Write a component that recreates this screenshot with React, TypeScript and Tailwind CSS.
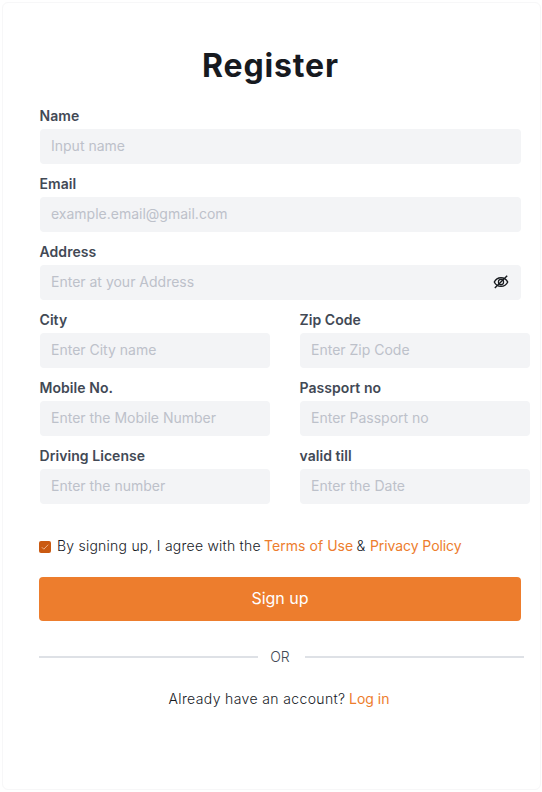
import React from "react";

type FieldProps = {
  label: string;
  placeholder: string;
  children?: React.ReactNode;
};

function Field({ label, placeholder, children }: FieldProps) {
  return (
    <label className="flex h-[58px] flex-col">
      <span className="h-[23px] text-sm leading-5 font-semibold tracking-[0.06px] text-[#424955]">{label}</span>
      <span className="flex h-[35px] items-center rounded-[4px] bg-[#f3f4f6] pr-3 pl-[11.5px]">
        <input
          className="min-w-0 flex-1 bg-transparent pb-[2px] text-sm leading-5 text-[#424955] outline-none placeholder:text-[#bdc1ca]"
          placeholder={placeholder}
        />
        {children}
      </span>
    </label>
  );
}

function EyeOff() {
  return (
    <svg className="mb-px size-4 shrink-0" viewBox="0 0 16 16" fill="none" stroke="#171a1f" strokeWidth="1.4">
      <path d="M1.3 8C2.6 5.2 5 3.7 8 3.7S13.4 5.2 14.7 8C13.4 10.8 11 12.3 8 12.3S2.6 10.8 1.3 8Z" />
      <circle cx="8" cy="8" r="2.6" strokeWidth="1.2" />
      <path d="M1.8 14 14.2 1.8" />
    </svg>
  );
}

export default function App() {
  return (
    <div className="h-[792px] w-[542px] bg-white pt-[2px] pl-[2px] font-['Inter','Liberation_Sans',sans-serif]">
      <main className="h-[788px] w-[539px] rounded-[6px] border border-[#f7f7f8] bg-white pt-[38px] pl-9">
        <h1 className="ml-[163px] h-[65px] pt-px text-[32px] leading-[48px] font-bold tracking-[0.85px] whitespace-nowrap text-[#171a1f]">
          Register
        </h1>
        <form>
          <div className="ml-[0.5px] flex w-[481px] flex-col gap-[10px]">
            <Field label="Name" placeholder="Input name" />
            <Field label="Email" placeholder="example.email@gmail.com" />
            <Field label="Address" placeholder="Enter at your Address">
              <EyeOff />
            </Field>
          </div>
          <div className="mt-[10px] ml-[0.5px] grid w-[490px] grid-cols-[230px_230px] gap-x-[30px] gap-y-[10px]">
            <Field label="City" placeholder="Enter City name" />
            <Field label="Zip Code" placeholder="Enter Zip Code" />
            <Field label="Mobile No." placeholder="Enter the Mobile Number" />
            <Field label="Passport no" placeholder="Enter Passport no" />
            <Field label="Driving License" placeholder="Enter the number" />
            <Field label="valid till" placeholder="Enter the Date" />
          </div>
          <div className="mt-[33px] flex h-5 items-center text-sm leading-5 font-light whitespace-nowrap text-[#171a1f]">
            <svg className="mr-[6px] size-3 shrink-0" viewBox="0 0 12 12" fill="none">
              <rect width="12" height="12" rx="2" fill="#ca5a12" />
              <path d="m2.8 6.2 2 2 4.4-4.5" stroke="#f8c9a6" strokeWidth="0.8" />
            </svg>
            <span className="w-[207px] pb-[2px] tracking-[0.23px]">By signing up, I agree with the</span>
            <a className="w-[92.5px] pb-[2px] font-normal tracking-[0.05px] text-[#ed7d2d]">Terms of Use</a>
            <span className="w-[13.5px] pb-[2px]">&amp;</span>
            <a className="pb-[2px] font-normal tracking-[-0.08px] text-[#ed7d2d]">Privacy Policy</a>
          </div>
          <button type="button" className="mt-5 block h-11 w-[482px] rounded-[4px] bg-[#ed7d2d] pb-[2px] text-base leading-6 text-white">
            Sign up
          </button>
        </form>
        <div className="mt-[26px] flex h-5 w-[485px] items-center text-sm leading-5 font-light text-[#424955]">
          <span className="h-[2px] w-[219px] bg-[#dee1e6]" />
          <span className="flex-1 pr-[3px] text-center">OR</span>
          <span className="h-[2px] w-[219px] bg-[#dee1e6]" />
        </div>
        <p className="mt-[22px] ml-[129.5px] flex h-5 text-sm leading-5 font-light whitespace-nowrap text-[#171a1f]">
          <span className="w-[180.5px] tracking-[0.37px]">Already have an account?</span>
          <a className="font-normal text-[#ed7d2d]">Log in</a>
        </p>
      </main>
    </div>
  );
}
